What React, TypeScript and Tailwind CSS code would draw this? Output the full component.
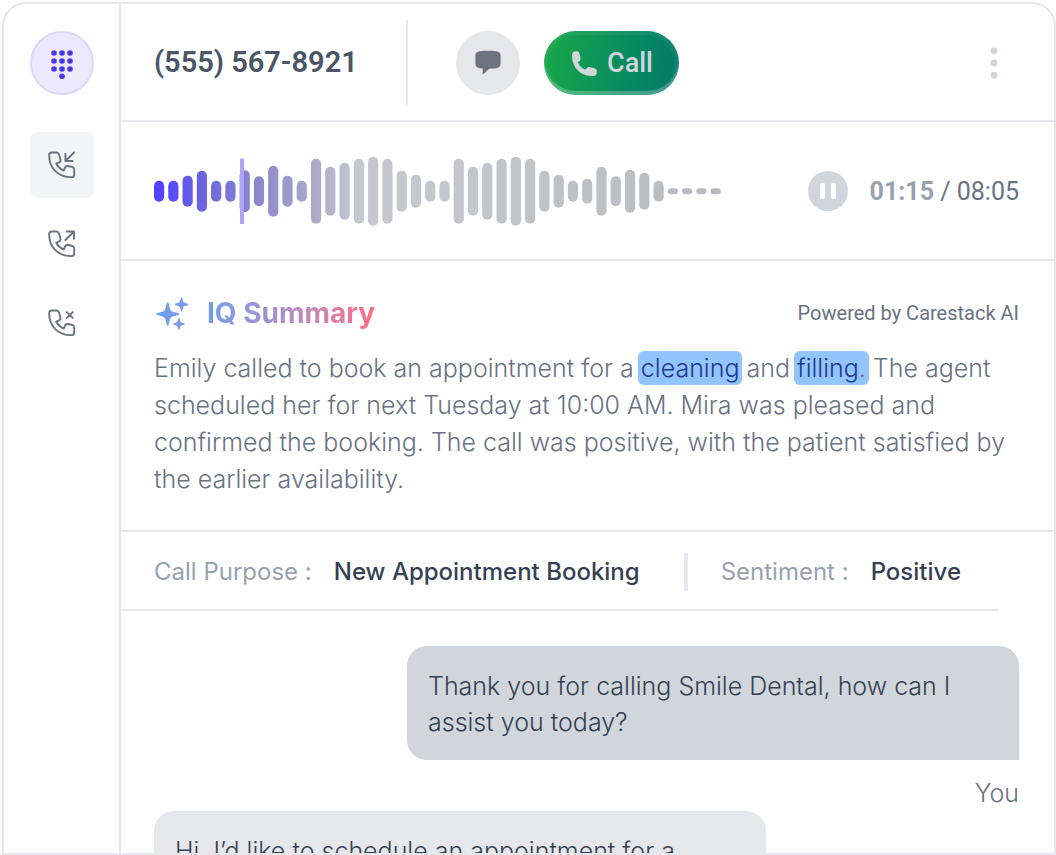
import type { ReactNode } from "react";

const BARS = [
  21, 21, 31, 41, 21, 21, 42, 30, 51, 31, 21, 65, 49, 57, 65, 69, 65, 41, 33, 21,
  21, 65, 49, 57, 65, 69, 65, 41, 33, 21, 25, 49, 30, 43, 37, 21, 6, 6, 6, 6,
];
const PITCH = 14.27;

function PhoneIcon({ children }: { children: ReactNode }) {
  return (
    <svg width="32" height="32" viewBox="0 0 32 32" fill="none" stroke="#6b7280" strokeWidth="1.9" strokeLinecap="round" strokeLinejoin="round" aria-hidden="true">
      <path d="M3.2 6.2C3.2 4.2 4 3.5 5.6 3.5H10.4C11.9 3.5 12.6 4 13 5.4L14.4 10.5C14.8 12 14.5 12.8 13.2 13.4L10.3 14.7C12 18 14.6 20.2 17.9 21.5L19 18.6C19.6 17.1 20.4 16.7 21.8 17L26.4 18C27.7 18.3 28.2 19 28.2 20.4V25.4C28.2 27.3 27.4 28.1 25.6 28.1C12.2 28.3 3 19.2 3.2 6.2Z" />
      {children}
    </svg>
  );
}

function Waveform() {
  return (
    <svg className="shrink-0" width="568" height="72" viewBox="0 0 568 72" role="img" aria-label="Call recording">
      <defs>
        <linearGradient id="wave" gradientUnits="userSpaceOnUse" x1="0" y1="0" x2="568" y2="0">
          <stop offset="0.01" stopColor="#5243ff" />
          <stop offset="0.09" stopColor="#6f66dc" />
          <stop offset="0.17" stopColor="#8983cd" />
          <stop offset="0.29" stopColor="#adadc8" />
          <stop offset="0.36" stopColor="#c5c8d0" />
          <stop offset="0.55" stopColor="#c3c6cc" />
          <stop offset="1" stopColor="#b9babf" />
        </linearGradient>
      </defs>
      <g fill="url(#wave)">
        {BARS.map((h, i) => (
          <rect key={i} x={i * PITCH} y={36.3 - h / 2} width="10.2" height={h} rx={Math.min(5.1, h / 2)} />
        ))}
      </g>
      <rect x="86" y="3.5" width="4" height="65.5" fill="#ada5f5" />
    </svg>
  );
}

export default function App() {
  return (
    <div className="h-screen overflow-hidden bg-white pt-0.5 pl-0.5 font-['Inter',sans-serif] text-[25px] font-light text-gray-500">
      <div className="flex h-full overflow-hidden rounded-t-3xl border-2 border-gray-200">
        <nav aria-label="Calls" className="flex w-[117px] shrink-0 flex-col items-center gap-[13px] border-r-2 border-gray-200 pt-[27px]">
          <button aria-label="Dial pad" className="mb-6 flex size-16 items-center justify-center rounded-full border-2 border-[#dcd8f9] bg-[#ebe9fb]">
            <svg width="24" height="32" viewBox="0 0 24 32" fill="#4b39e3" aria-hidden="true">
              {[4, 12, 20].map((x) => [6, 14, 22].map((y) => <circle key={`${x}-${y}`} cx={x} cy={y} r="2.8" />))}
              <circle cx="12" cy="29.2" r="2.8" />
            </svg>
          </button>
          <button aria-label="Incoming calls" className="flex h-[66px] w-16 items-center justify-center rounded-lg bg-gray-100">
            <PhoneIcon><path d="M28 3.5L19.4 12M19.4 4.8V12H26.6" /></PhoneIcon>
          </button>
          <button aria-label="Outgoing calls" className="flex h-[66px] w-16 items-center justify-center rounded-lg">
            <PhoneIcon><path d="M19.4 12L28 3.5M20.8 3.5H28V10.8" /></PhoneIcon>
          </button>
          <button aria-label="Missed calls" className="flex h-[66px] w-16 items-center justify-center rounded-lg">
            <PhoneIcon><path d="M20.9 5.1L26.7 10.9M26.7 5.1L20.9 10.9" /></PhoneIcon>
          </button>
        </nav>

        <main className="flex min-w-0 flex-1 flex-col">
          <header className="flex h-[118px] shrink-0 items-center border-b-2 border-gray-200 pt-px pr-[50px] pl-[33px]">
            <h1 className="w-[252px] font-['Roboto',sans-serif] text-[29px] font-semibold text-gray-600">(555) 567-8921</h1>
            <div className="mr-12 h-[85px] w-0.5 bg-gray-200" />
            <button aria-label="Message" className="mr-6 flex size-16 items-center justify-center rounded-full bg-gray-200">
              <svg width="26" height="26" viewBox="0 0 26 26" fill="#6b7280" aria-hidden="true">
                <path d="M5 1.2C10 .6 16 .6 21 1.2C24.5 1.6 25.6 3 25.6 6V13C25.6 16 24.5 17.7 21.5 18.2C19.3 18.5 16.5 18.6 14.2 18.7L8.7 24C8.2 24.5 7.7 24.3 7.7 23.6V18.5L4.5 18.2C1.5 17.7 .4 16 .4 13V6C.4 3 1.5 1.6 5 1.2Z" />
              </svg>
            </button>
            <button className="flex h-16 items-center gap-2 rounded-full bg-linear-100 from-[#16a34a] from-10% to-[#047c68] to-90% px-[26px] pt-0.5 font-['Roboto',sans-serif] text-[27px] font-medium text-gray-300 shadow-[inset_0_-4px_0_rgba(255,255,255,0.2),inset_0_0_0_4px_rgba(255,255,255,0.06)]">
              <svg width="29" height="29" viewBox="0 0 29 29" fill="#d1d5db" aria-hidden="true">
                <path d="M2 6.5C2 3.5 3.3 2.2 6 2.2C8.3 2.2 9 2.7 9.6 5.1L10.4 8.6C10.8 10.2 10.5 11.1 9.4 12.1L7.9 13.4C9.7 17 11.8 19.1 15.3 20.8L16.7 19.2C17.7 18.1 18.6 17.9 20.1 18.2L23.8 19C26.1 19.5 26.8 20.2 26.8 22.5C26.8 25.7 25.7 27 22.5 27C10.4 27 2 18.6 2 6.5Z" />
              </svg>
              Call
            </button>
            <button aria-label="More options" className="ml-auto px-1.5">
              <svg width="8" height="32" viewBox="0 0 8 32" fill="#d1d5db" aria-hidden="true">
                <circle cx="4" cy="3.8" r="3.4" />
                <circle cx="4" cy="16" r="3.4" />
                <circle cx="4" cy="28.2" r="3.4" />
              </svg>
            </button>
          </header>

          <section aria-label="Recording" className="flex h-[139px] shrink-0 items-center justify-between border-b-2 border-gray-200 pr-[35px] pl-[33px] font-['Roboto',sans-serif] font-normal">
            <Waveform />
            <div className="flex items-center gap-[22px]">
              <button aria-label="Pause" className="flex size-10 items-center justify-center gap-1.5 rounded-full bg-gray-300">
                <span className="h-4 w-[5px] rounded-xs bg-white" />
                <span className="h-4 w-[5px] rounded-xs bg-white" />
              </button>
              <p className="pt-0.5 whitespace-nowrap"><span className="font-bold text-gray-400">01:15</span> / 08:05</p>
            </div>
          </section>

          <section className="shrink-0 border-b-2 border-gray-200 pt-[30px] pr-[35px] pb-8 pl-[33px]">
            <div className="flex h-11 items-center justify-between">
              <div className="flex items-center gap-[17px]">
                <svg width="36" height="36" viewBox="0 0 36 36" aria-hidden="true">
                  <defs>
                    <linearGradient id="spark" x1="0" y1="0" x2="1" y2="0">
                      <stop stopColor="#63a3f7" />
                      <stop offset="1" stopColor="#8098e0" />
                    </linearGradient>
                  </defs>
                  <path fill="url(#spark)" d="M13.7 7.3C15.2 7.3 15.3 13.9 17 15.7C18.7 17.4 25.4 17.5 25.4 19.1C25.4 20.7 18.7 20.8 17 22.5C15.3 24.3 15.2 30.7 13.7 30.7C12.2 30.7 12.1 24.3 10.4 22.5C8.7 20.8 2 20.7 2 19.1C2 17.5 8.7 17.4 10.4 15.7C12.1 13.9 12.2 7.3 13.7 7.3Z" />
                  <path fill="#7a9be6" d="M27.5 2.5C28.5 2.5 28.7 6.3 29.6 7.2C30.5 8.1 34.4 8.4 34.4 9.4C34.4 10.4 30.5 10.7 29.6 11.6C28.7 12.5 28.5 16.3 27.5 16.3C26.5 16.3 26.3 12.5 25.4 11.6C24.5 10.7 20.6 10.4 20.6 9.4C20.6 8.4 24.5 8.1 25.4 7.2C26.3 6.3 26.5 2.5 27.5 2.5Z" />
                  <path fill="#7a9be6" d="M25 23.1C25.9 23.1 26.1 26.3 26.9 27.1C27.7 27.9 31 28.2 31 29.1C31 30 27.7 30.3 26.9 31.1C26.1 31.9 25.9 35.1 25 35.1C24.1 35.1 23.9 31.9 23.1 31.1C22.3 30.3 19 30 19 29.1C19 28.2 22.3 27.9 23.1 27.1C23.9 26.3 24.1 23.1 25 23.1Z" />
                </svg>
                <h2 className="bg-linear-to-r from-[#6f9eef] via-[#b38bc4] to-[#ff6b81] bg-clip-text text-[28px] leading-10 font-bold text-transparent">IQ Summary</h2>
              </div>
              <p className="font-['Roboto',sans-serif] text-xl font-normal">Powered by Carestack AI</p>
            </div>
            <p className="mt-[15px] leading-[37px]">
              Emily called to book an appointment for a{" "}
              <mark className="-mx-[3px] rounded-md bg-[#93c5fd] px-[3px] py-0.5 text-blue-900">cleaning</mark> and{" "}
              <mark className="-mx-[3px] rounded-md bg-[#93c5fd] px-[3px] py-0.5 text-blue-900">filling<span className="text-gray-500">.</span></mark>{" "}
              The agent scheduled her for next Tuesday at 10:00 AM. Mira was pleased and confirmed the booking. The call was positive, with the patient satisfied by the earlier availability.
            </p>
          </section>

          <dl className="mr-[55px] flex h-[79px] shrink-0 items-center border-b-2 border-gray-200 pt-0.5 pl-[33px] text-2xl whitespace-nowrap">
            <dt className="mr-[22px] font-normal text-gray-400">Call Purpose :</dt>
            <dd className="font-medium text-gray-700">New Appointment Booking</dd>
            <dd aria-hidden="true" className="mr-[33px] ml-11 h-[38px] w-1 bg-gray-200" />
            <dt className="mr-[22px] font-normal text-gray-400">Sentiment :</dt>
            <dd className="font-medium text-gray-700">Positive</dd>
          </dl>

          <section aria-label="Transcript" className="flex min-h-0 flex-1 flex-col overflow-hidden pt-[35px] pr-[35px] pl-[33px]">
            <p className="ml-auto w-[612px] shrink-0 rounded-[20px] rounded-br-none bg-gray-300 px-[21px] pt-[22px] pb-5 leading-9 text-gray-700">
              Thank you for calling Smile Dental, how can I assist you today?
            </p>
            <p className="mt-[15px] text-right leading-9">You</p>
            <p className="w-[612px] shrink-0 rounded-[20px] rounded-bl-none bg-gray-200 px-[21px] pt-[22px] pb-5 leading-9 text-gray-700">
              Hi, I’d like to schedule an appointment for a cleaning and a filling.
            </p>
          </section>
        </main>
      </div>
    </div>
  );
}
